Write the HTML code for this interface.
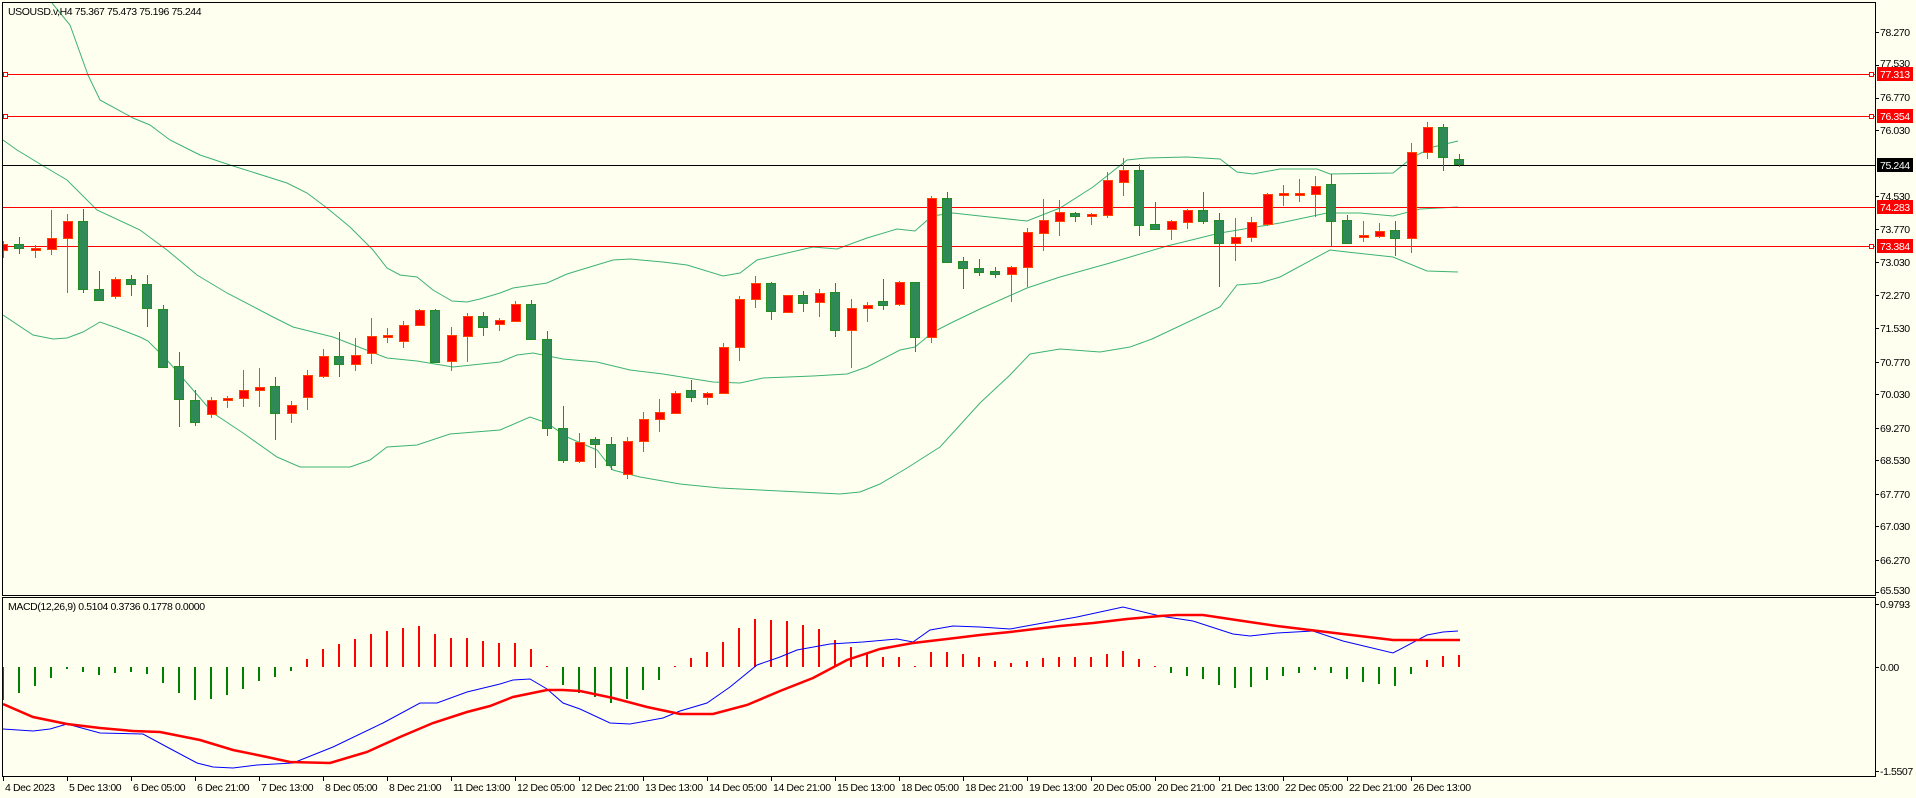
<!DOCTYPE html>
<html><head><meta charset="utf-8"><style>
html,body{margin:0;padding:0;background:#fffff0;}
svg{display:block;font-family:"Liberation Sans",sans-serif;font-size:10.5px;letter-spacing:-0.4px;}
.R{fill:#ff0000;stroke:#ff4500;stroke-width:1}
.G{fill:#2e8b57;stroke:#228b22;stroke-width:1}
</style></head><body>
<svg width="1916" height="798" viewBox="0 0 1916 798" xmlns="http://www.w3.org/2000/svg">
<rect width="1916" height="798" fill="#fffff0"/>
<defs><clipPath id="cm"><rect x="3" y="3" width="1872" height="592"/></clipPath><clipPath id="cd"><rect x="3" y="598" width="1872" height="178"/></clipPath></defs>
<g clip-path="url(#cm)">
<g fill="none" stroke="#3cb371" stroke-width="1">
<polyline points="52,3 70,25 88,75 100,100 133,118 150,125 170,140 190,150 200,155 230,165 287,183 307,193 327,208 350,227 373,250 387,268 400,275 417,277 433,290 452,301 467,302 480,299 500,293 513,288 547,283 567,274 613,260 630,259 663,262 687,265 723,276 740,273 757,260 813,247 837,249 867,238 897,229 915,231 932,216 953,213 980,216 1027,221 1060,208 1093,187 1127,160 1147,158 1187,157 1220,159 1237,172 1253,174 1280,169 1317,169 1330,174 1393,173 1413,157 1433,147 1458,141"/>
<polyline points="3,140 17,150 40,164 67,180 97,210 140,230 167,250 197,275 227,293 273,317 293,327 333,337 387,358 417,361 453,367 500,362 517,355 533,353 563,359 597,362 630,370 663,374 713,382 740,383 763,378 813,376 847,374 867,367 900,350 915,347 933,332 953,322 980,309 1027,288 1060,277 1110,263 1167,246 1220,233 1280,223 1327,213 1360,213 1393,216 1420,209 1458,207"/>
<polyline points="3,315 33,335 53,339 67,338 83,332 100,322 117,328 140,337 148,341 167,360 187,383 213,413 243,433 277,457 300,467 350,467 370,460 387,447 417,445 450,434 500,430 530,417 547,423 567,437 597,450 613,470 640,477 680,484 720,488 760,490 800,492 840,494 860,492 880,484 907,468 940,447 980,403 1010,375 1030,354 1060,349 1100,352 1130,347 1152,339 1220,307 1237,285 1260,283 1280,277 1330,250 1347,252 1393,257 1427,271 1458,272"/>
</g>
<g stroke-width="1" fill="none">
<line x1="3" y1="74.5" x2="1875" y2="74.5" stroke="#ff0000"/>
<line x1="3" y1="116.5" x2="1875" y2="116.5" stroke="#ff0000"/>
<line x1="3" y1="165.5" x2="1875" y2="165.5" stroke="#000"/>
<line x1="3" y1="207.5" x2="1875" y2="207.5" stroke="#ff0000"/>
<line x1="3" y1="246.5" x2="1875" y2="246.5" stroke="#ff0000"/>
<rect x="3.5" y="72.5" width="4" height="4" stroke="#ff0000" fill="#fff"/>
<rect x="3.5" y="114.5" width="4" height="4" stroke="#ff0000" fill="#fff"/>
<rect x="3.5" y="244.5" width="4" height="4" stroke="#ff0000" fill="#fff"/>
</g>
<path fill="none" stroke="#ff4500" stroke-width="1" d="M3.5 241V258M35.5 245V258M51.5 210V255M67.5 214V293M115.5 277V299M211.5 397V418M227.5 396V408M243.5 370V407M259.5 368V407M291.5 401V423M307.5 370V410M323.5 349V378M355.5 338V371M371.5 318V364M387.5 328V343M403.5 321V348M419.5 309V326M451.5 327V371M467.5 313V362M499.5 318V331M515.5 301V322M579.5 433V463M627.5 437V479M643.5 412V452M659.5 399V432M675.5 391V414M707.5 392V405M723.5 343V394M739.5 296V361M755.5 276V308M787.5 295V313M819.5 289V317M851.5 299V368M867.5 302V322M899.5 281V306M931.5 196V343M1011.5 266V302M1027.5 228V287M1043.5 199V251M1059.5 200V236M1091.5 213V225M1107.5 172V218M1123.5 158V196M1171.5 220V240M1187.5 209V229M1235.5 218V261M1251.5 217V242M1267.5 193V226M1283.5 185V206M1299.5 179V202M1315.5 176V217M1363.5 221V242M1379.5 223V238M1411.5 143V253M1427.5 122V159"/>
<path fill="none" stroke="#228b22" stroke-width="1" d="M19.5 237V254M83.5 209V293M99.5 271V300M131.5 275V296M147.5 275V327M163.5 305V368M179.5 352V427M195.5 390V426M275.5 377V440M339.5 332V377M435.5 309V363M483.5 312V336M531.5 300V339M547.5 331V436M563.5 406V463M595.5 437V468M611.5 437V470M691.5 380V402M771.5 282V320M803.5 291V312M835.5 283V337M883.5 279V310M915.5 282V352M947.5 192V263M963.5 257V289M979.5 259V276M995.5 267V278M1075.5 212V222M1139.5 164V236M1155.5 202V230M1203.5 192V224M1219.5 213V287M1331.5 174V246M1347.5 215V244M1395.5 221V256M1443.5 124V171M1459.5 154V167"/>
<g class="R">
<rect x="-1.5" y="244.5" width="9" height="6"/>
<rect x="31.5" y="248.5" width="9" height="2"/>
<rect x="47.5" y="238.5" width="9" height="11"/>
<rect x="63.5" y="221.5" width="9" height="17"/>
<rect x="111.5" y="279.5" width="9" height="17"/>
<rect x="207.5" y="400.5" width="9" height="14"/>
<rect x="223.5" y="398.5" width="9" height="2"/>
<rect x="239.5" y="390.5" width="9" height="8"/>
<rect x="255.5" y="387.5" width="9" height="3"/>
<rect x="287.5" y="405.5" width="9" height="8"/>
<rect x="303.5" y="375.5" width="9" height="22"/>
<rect x="319.5" y="356.5" width="9" height="20"/>
<rect x="351.5" y="355.5" width="9" height="9"/>
<rect x="367.5" y="336.5" width="9" height="17"/>
<rect x="383.5" y="335.5" width="9" height="2"/>
<rect x="399.5" y="325.5" width="9" height="16"/>
<rect x="415.5" y="310.5" width="9" height="15"/>
<rect x="447.5" y="335.5" width="9" height="26"/>
<rect x="463.5" y="316.5" width="9" height="20"/>
<rect x="495.5" y="320.5" width="9" height="4"/>
<rect x="511.5" y="304.5" width="9" height="17"/>
<rect x="575.5" y="442.5" width="9" height="19"/>
<rect x="623.5" y="441.5" width="9" height="33"/>
<rect x="639.5" y="419.5" width="9" height="22"/>
<rect x="655.5" y="412.5" width="9" height="7"/>
<rect x="671.5" y="393.5" width="9" height="20"/>
<rect x="703.5" y="393.5" width="9" height="4"/>
<rect x="719.5" y="347.5" width="9" height="46"/>
<rect x="735.5" y="299.5" width="9" height="48"/>
<rect x="751.5" y="283.5" width="9" height="16"/>
<rect x="783.5" y="295.5" width="9" height="17"/>
<rect x="815.5" y="293.5" width="9" height="9"/>
<rect x="847.5" y="308.5" width="9" height="22"/>
<rect x="863.5" y="305.5" width="9" height="3"/>
<rect x="895.5" y="282.5" width="9" height="22"/>
<rect x="927.5" y="198.5" width="9" height="139"/>
<rect x="1007.5" y="267.5" width="9" height="7"/>
<rect x="1023.5" y="232.5" width="9" height="35"/>
<rect x="1039.5" y="220.5" width="9" height="13"/>
<rect x="1055.5" y="212.5" width="9" height="9"/>
<rect x="1087.5" y="214.5" width="9" height="2"/>
<rect x="1103.5" y="180.5" width="9" height="35"/>
<rect x="1119.5" y="170.5" width="9" height="12"/>
<rect x="1167.5" y="221.5" width="9" height="8"/>
<rect x="1183.5" y="210.5" width="9" height="12"/>
<rect x="1231.5" y="237.5" width="9" height="6"/>
<rect x="1247.5" y="222.5" width="9" height="15"/>
<rect x="1263.5" y="194.5" width="9" height="30"/>
<rect x="1279.5" y="193.5" width="9" height="2"/>
<rect x="1295.5" y="193.5" width="9" height="2"/>
<rect x="1311.5" y="186.5" width="9" height="8"/>
<rect x="1359.5" y="235.5" width="9" height="2"/>
<rect x="1375.5" y="231.5" width="9" height="5"/>
<rect x="1407.5" y="152.5" width="9" height="86"/>
<rect x="1423.5" y="127.5" width="9" height="25"/>
</g>
<g class="G">
<rect x="14.5" y="244.5" width="9" height="4"/>
<rect x="78.5" y="221.5" width="9" height="68"/>
<rect x="94.5" y="289.5" width="9" height="11"/>
<rect x="126.5" y="279.5" width="9" height="5"/>
<rect x="142.5" y="284.5" width="9" height="24"/>
<rect x="158.5" y="309.5" width="9" height="58"/>
<rect x="174.5" y="366.5" width="9" height="33"/>
<rect x="190.5" y="400.5" width="9" height="22"/>
<rect x="270.5" y="386.5" width="9" height="27"/>
<rect x="334.5" y="356.5" width="9" height="8"/>
<rect x="430.5" y="310.5" width="9" height="52"/>
<rect x="478.5" y="316.5" width="9" height="11"/>
<rect x="526.5" y="304.5" width="9" height="35"/>
<rect x="542.5" y="339.5" width="9" height="89"/>
<rect x="558.5" y="428.5" width="9" height="32"/>
<rect x="590.5" y="439.5" width="9" height="5"/>
<rect x="606.5" y="444.5" width="9" height="21"/>
<rect x="686.5" y="390.5" width="9" height="7"/>
<rect x="766.5" y="283.5" width="9" height="28"/>
<rect x="798.5" y="295.5" width="9" height="8"/>
<rect x="830.5" y="292.5" width="9" height="38"/>
<rect x="878.5" y="301.5" width="9" height="4"/>
<rect x="910.5" y="282.5" width="9" height="55"/>
<rect x="942.5" y="198.5" width="9" height="64"/>
<rect x="958.5" y="261.5" width="9" height="7"/>
<rect x="974.5" y="268.5" width="9" height="4"/>
<rect x="990.5" y="271.5" width="9" height="3"/>
<rect x="1070.5" y="213.5" width="9" height="3"/>
<rect x="1134.5" y="170.5" width="9" height="55"/>
<rect x="1150.5" y="224.5" width="9" height="5"/>
<rect x="1198.5" y="210.5" width="9" height="11"/>
<rect x="1214.5" y="220.5" width="9" height="23"/>
<rect x="1326.5" y="184.5" width="9" height="37"/>
<rect x="1342.5" y="220.5" width="9" height="23"/>
<rect x="1390.5" y="230.5" width="9" height="8"/>
<rect x="1438.5" y="127.5" width="9" height="30"/>
<rect x="1454.5" y="159.5" width="9" height="5"/>
</g>
<g fill="#fff" stroke="#ff0000">
<rect x="1869.5" y="72.5" width="4" height="4"/>
<rect x="1869.5" y="114.5" width="4" height="4"/>
<rect x="1869.5" y="244.5" width="4" height="4"/>
</g>
</g>
<text x="8" y="15" fill="#000">USOUSD.v,H4  75.367 75.473 75.196 75.244</text>

<g clip-path="url(#cd)">
<path fill="none" stroke="#008000" stroke-width="2" d="M3 667V700M19 667V693M35 667V686M51 667V678M67 667V669M83 667V672M99 667V675M115 667V673M131 667V672M147 667V674M163 667V683M179 667V693M195 667V700M211 667V699M227 667V695M243 667V689M259 667V681M275 667V677M291 667V671M563 667V685M579 667V693M595 667V697M611 667V703M627 667V699M643 667V690M659 667V680M1171 667V673M1187 667V676M1203 667V679M1219 667V685M1235 667V688M1251 667V687M1267 667V680M1283 667V676M1299 667V673M1315 667V670M1331 667V673M1347 667V679M1363 667V682M1379 667V684M1395 667V686M1411 667V674"/>
<path fill="none" stroke="#ff0000" stroke-width="2" d="M307 667V659M323 667V649M339 667V644M355 667V639M371 667V634M387 667V631M403 667V628M419 667V626M435 667V634M451 667V638M467 667V638M483 667V641M499 667V643M515 667V643M531 667V649M547 667V666M675 667V666M691 667V658M707 667V652M723 667V642M739 667V628M755 667V619M771 667V620M787 667V621M803 667V625M819 667V629M835 667V640M851 667V647M867 667V654M883 667V657M899 667V657M915 667V666M931 667V652M947 667V652M963 667V654M979 667V657M995 667V661M1011 667V663M1027 667V661M1043 667V658M1059 667V657M1075 667V657M1091 667V657M1107 667V654M1123 667V651M1139 667V659M1155 667V666M1427 667V660M1443 667V656M1459 667V655"/>
<polyline fill="none" stroke="#0000ff" stroke-width="1" points="3,729 33,731 50,729 67,724 100,733 143,734 167,747 197,763 213,767 233,768 257,765 293,763 333,747 383,723 420,703 437,703 467,692 500,684 513,680 530,679 547,689 563,703 580,709 610,723 630,724 663,718 680,711 707,703 730,687 757,665 780,657 797,650 830,644 863,642 897,639 913,642 930,630 953,626 980,627 1010,629 1043,623 1077,617 1123,607 1160,616 1193,621 1233,634 1250,636 1277,633 1313,631 1343,641 1393,653 1427,635 1443,632 1458,631"/>
<polyline fill="none" stroke="#ff0000" stroke-width="2.5" points="3,704 33,717 67,724 100,728 133,731 160,732 200,740 233,750 267,757 290,762 330,763 367,752 400,737 433,723 467,712 490,706 513,697 547,690 563,690 580,691 613,698 647,707 680,714 713,714 747,705 780,691 813,678 847,660 880,649 913,643 947,639 980,635 1010,632 1060,626 1093,623 1127,619 1160,616 1177,615 1203,615 1243,621 1277,626 1310,630 1343,634 1393,640 1460,640"/>
</g>
<text x="8" y="610" fill="#000">MACD(12,26,9) 0.5104 0.3736 0.1778 0.0000</text>

<g fill="none" stroke="#000" stroke-width="1">
<rect x="2.5" y="2.5" width="1873" height="593"/>
<rect x="2.5" y="597.5" width="1873" height="179"/>
</g>
<g stroke="#000" stroke-width="1">
<path d="M1875 32.5h4M1875 65.5h4M1875 98.5h4M1875 130.5h4M1875 196.5h4M1875 229.5h4M1875 262.5h4M1875 295.5h4M1875 328.5h4M1875 362.5h4M1875 394.5h4M1875 428.5h4M1875 460.5h4M1875 494.5h4M1875 526.5h4M1875 560.5h4M1875 592.5h4M1875 604.5h4M1875 667.5h4M1875 771.5h4"/>
</g>
<g fill="#000">
<text x="1880" y="36">78.270</text>
<text x="1880" y="67">77.530</text>
<text x="1880" y="101">76.770</text>
<text x="1880" y="134">76.030</text>
<text x="1880" y="200">74.530</text>
<text x="1880" y="233">73.770</text>
<text x="1880" y="266">73.030</text>
<text x="1880" y="299">72.270</text>
<text x="1880" y="332">71.530</text>
<text x="1880" y="366">70.770</text>
<text x="1880" y="398">70.030</text>
<text x="1880" y="432">69.270</text>
<text x="1880" y="464">68.530</text>
<text x="1880" y="498">67.770</text>
<text x="1880" y="530">67.030</text>
<text x="1880" y="564">66.270</text>
<text x="1880" y="594">65.530</text>
<text x="1880" y="608">0.9793</text>
<text x="1880" y="671">0.00</text>
<text x="1880" y="775">-1.5507</text>
</g>
<rect x="1877" y="67" width="36" height="14" fill="#ff0000"/><text x="1880" y="78" fill="#fff">77.313</text>
<rect x="1877" y="109" width="36" height="14" fill="#ff0000"/><text x="1880" y="120" fill="#fff">76.354</text>
<rect x="1877" y="158" width="36" height="14" fill="#000"/><text x="1880" y="169" fill="#fff">75.244</text>
<rect x="1877" y="200" width="36" height="14" fill="#ff0000"/><text x="1880" y="211" fill="#fff">74.283</text>
<rect x="1877" y="239" width="36" height="14" fill="#ff0000"/><text x="1880" y="250" fill="#fff">73.384</text>
<path stroke="#000" stroke-width="1" d="M3.5 777v4M67.5 777v4M131.5 777v4M195.5 777v4M259.5 777v4M323.5 777v4M387.5 777v4M451.5 777v4M515.5 777v4M579.5 777v4M643.5 777v4M707.5 777v4M771.5 777v4M835.5 777v4M899.5 777v4M963.5 777v4M1027.5 777v4M1091.5 777v4M1155.5 777v4M1219.5 777v4M1283.5 777v4M1347.5 777v4M1411.5 777v4"/>
<g fill="#000">
<text x="5" y="791">4 Dec 2023</text>
<text x="69" y="791">5 Dec 13:00</text>
<text x="133" y="791">6 Dec 05:00</text>
<text x="197" y="791">6 Dec 21:00</text>
<text x="261" y="791">7 Dec 13:00</text>
<text x="325" y="791">8 Dec 05:00</text>
<text x="389" y="791">8 Dec 21:00</text>
<text x="453" y="791">11 Dec 13:00</text>
<text x="517" y="791">12 Dec 05:00</text>
<text x="581" y="791">12 Dec 21:00</text>
<text x="645" y="791">13 Dec 13:00</text>
<text x="709" y="791">14 Dec 05:00</text>
<text x="773" y="791">14 Dec 21:00</text>
<text x="837" y="791">15 Dec 13:00</text>
<text x="901" y="791">18 Dec 05:00</text>
<text x="965" y="791">18 Dec 21:00</text>
<text x="1029" y="791">19 Dec 13:00</text>
<text x="1093" y="791">20 Dec 05:00</text>
<text x="1157" y="791">20 Dec 21:00</text>
<text x="1221" y="791">21 Dec 13:00</text>
<text x="1285" y="791">22 Dec 05:00</text>
<text x="1349" y="791">22 Dec 21:00</text>
<text x="1413" y="791">26 Dec 13:00</text>
</g>
</svg>
</body></html>
